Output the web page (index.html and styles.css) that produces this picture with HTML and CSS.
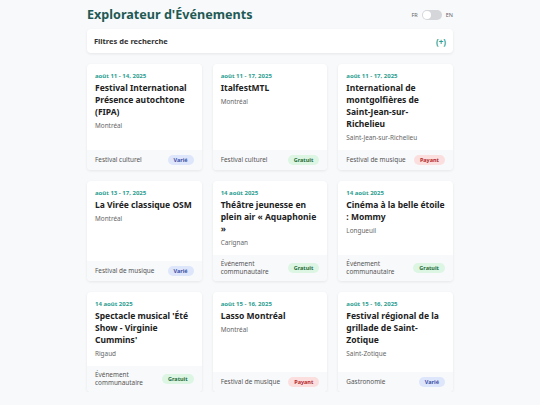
FILE: index.html
```html
<!DOCTYPE html>
<html lang="fr">
<head>
<meta charset="utf-8">
<link rel="stylesheet" href="styles.css">
</head>
<body>
<div class="page">
  <header class="header">
    <h1 class="title">Explorateur d'Événements</h1>
    <div class="lang">
      <span class="lang-label">FR</span>
      <span class="toggle"><span class="knob"></span></span>
      <span class="lang-label">EN</span>
    </div>
  </header>
  <div class="filters">
    <span class="filters-title">Filtres de recherche</span>
    <span class="filters-plus">(+)</span>
  </div>
  <div class="grid">
    <div class="card">
      <div class="body">
        <div class="date">août 11 - 14, 2025</div>
        <div class="name">Festival International Présence autochtone (FIPA)</div>
        <div class="loc">Montréal</div>
      </div>
      <div class="foot"><span class="type">Festival culturel</span><span class="badge varie">Varié</span></div>
    </div>
    <div class="card">
      <div class="body">
        <div class="date">août 11 - 17, 2025</div>
        <div class="name">ItalfestMTL</div>
        <div class="loc">Montréal</div>
      </div>
      <div class="foot"><span class="type">Festival culturel</span><span class="badge gratuit">Gratuit</span></div>
    </div>
    <div class="card">
      <div class="body">
        <div class="date">août 11 - 17, 2025</div>
        <div class="name">International de montgolfières de Saint-Jean-sur-Richelieu</div>
        <div class="loc">Saint-Jean-sur-Richelieu</div>
      </div>
      <div class="foot"><span class="type">Festival de musique</span><span class="badge payant">Payant</span></div>
    </div>
    <div class="card">
      <div class="body">
        <div class="date">août 13 - 17, 2025</div>
        <div class="name">La Virée classique OSM</div>
        <div class="loc">Montréal</div>
      </div>
      <div class="foot"><span class="type">Festival de musique</span><span class="badge varie">Varié</span></div>
    </div>
    <div class="card">
      <div class="body">
        <div class="date">14 août 2025</div>
        <div class="name">Théâtre jeunesse en plein air « Aquaphonie »</div>
        <div class="loc">Carignan</div>
      </div>
      <div class="foot"><span class="type">Événement communautaire</span><span class="badge gratuit">Gratuit</span></div>
    </div>
    <div class="card">
      <div class="body">
        <div class="date">14 août 2025</div>
        <div class="name">Cinéma à la belle étoile : Mommy</div>
        <div class="loc">Longueuil</div>
      </div>
      <div class="foot"><span class="type">Événement communautaire</span><span class="badge gratuit">Gratuit</span></div>
    </div>
    <div class="card">
      <div class="body">
        <div class="date">14 août 2025</div>
        <div class="name">Spectacle musical 'Été Show - Virginie Cummins'</div>
        <div class="loc">Rigaud</div>
      </div>
      <div class="foot"><span class="type">Événement communautaire</span><span class="badge gratuit">Gratuit</span></div>
    </div>
    <div class="card">
      <div class="body">
        <div class="date">août 15 - 16, 2025</div>
        <div class="name">Lasso Montréal</div>
        <div class="loc">Montréal</div>
      </div>
      <div class="foot"><span class="type">Festival de musique</span><span class="badge payant">Payant</span></div>
    </div>
    <div class="card">
      <div class="body">
        <div class="date">août 15 - 16, 2025</div>
        <div class="name">Festival régional de la grillade de Saint-Zotique</div>
        <div class="loc">Saint-Zotique</div>
      </div>
      <div class="foot"><span class="type">Gastronomie</span><span class="badge varie">Varié</span></div>
    </div>
  </div>
</div>
</body>
</html>
```

FILE: styles.css
```css
* { box-sizing: border-box; }
html, body { margin: 0; padding: 0; }
body {
  background: #f8f9fb;
  font-family: "Noto Sans", "Open Sans", sans-serif;
  color: #222;
}
.page {
  width: 366px;
  margin: 0 auto;
  padding-top: 4px;
}
.header {
  display: flex;
  align-items: center;
  justify-content: space-between;
  height: 21px;
}
.title {
  margin: 0;
  font-size: 12.6px;
  font-weight: 700;
  color: #1f5a54;
}
.lang {
  display: flex;
  align-items: center;
  gap: 4px;
}
.lang-label {
  font-size: 5.5px;
  color: #666;
}
.toggle {
  width: 20px;
  height: 10px;
  border-radius: 5px;
  background: #d4d6da;
  position: relative;
  display: block;
}
.knob {
  position: absolute;
  left: 1px;
  top: 1px;
  width: 8px;
  height: 8px;
  border-radius: 50%;
  background: #fff;
}
.filters {
  margin-top: 4px;
  height: 24px;
  background: #fff;
  border-radius: 4px;
  box-shadow: 0 1px 3px rgba(0,0,0,0.08);
  display: flex;
  align-items: center;
  justify-content: space-between;
  padding: 0 7px;
}
.filters-title {
  font-size: 7.5px;
  font-weight: 700;
  color: #333;
}
.filters-plus {
  font-size: 8px;
  font-weight: 700;
  color: #2a9d8f;
}
.grid {
  margin-top: 11px;
  display: grid;
  grid-template-columns: repeat(3, 1fr);
  column-gap: 11px;
  row-gap: 11px;
}
.card {
  background: #fff;
  border-radius: 4px;
  box-shadow: 0 1px 3px rgba(0,0,0,0.08);
  display: flex;
  flex-direction: column;
  overflow: hidden;
}
.body {
  padding: 7.5px 8px 8.5px 8px;
  flex: 1;
}
.date {
  font-size: 6px;
  font-weight: 700;
  color: #2a9d8f;
  line-height: 9px;
}
.name {
  font-size: 8.5px;
  font-weight: 700;
  color: #222;
  line-height: 12px;
  margin-top: 1.5px;
}
.loc {
  font-size: 6.4px;
  color: #666;
  margin-top: 2.5px;
  line-height: 9px;
}
.foot {
  background: #f8f9fb;
  display: flex;
  align-items: center;
  justify-content: space-between;
  padding: 4.5px 8px;
  min-height: 20px;
}
.type {
  font-size: 6.4px;
  color: #555;
  line-height: 8.5px;
  max-width: 66px;
}
.badge {
  font-size: 5.5px;
  font-weight: 700;
  padding: 2px 6px;
  border-radius: 8px;
  line-height: 6px;
}
.varie { background: #dde6fb; color: #3d4fa6; }
.gratuit { background: #dcf6e3; color: #1f6b3b; }
.payant { background: #fbdede; color: #b3282d; }
```
